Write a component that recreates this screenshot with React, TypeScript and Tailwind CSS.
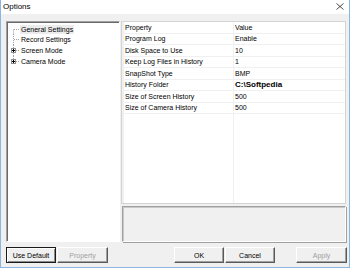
import React from "react";

const font = { fontFamily: '"Liberation Sans", Arial, sans-serif' };

const props: [string, string, boolean?][] = [
  ["Property", "Value"],
  ["Program Log", "Enable"],
  ["Disk Space to Use", "10"],
  ["Keep Log Files in History", "1"],
  ["SnapShot Type", "BMP"],
  ["History Folder", "C:\\Softpedia", true],
  ["Size of Screen History", "500"],
  ["Size of Camera History", "500"],
];

type Node = { label: string; kind: "first" | "mid" | "plus" | "lastplus"; selected?: boolean };

const tree: Node[] = [
  { label: "General Settings", kind: "first", selected: true },
  { label: "Record Settings", kind: "mid" },
  { label: "Screen Mode", kind: "plus" },
  { label: "Camera Mode", kind: "lastplus" },
];

function TreeGlyph({ kind }: { kind: Node["kind"] }) {
  const dot = { stroke: "#a0a0a0", strokeWidth: 1, strokeDasharray: "1 1" };
  const hasBox = kind === "plus" || kind === "lastplus";
  return (
    <svg width="12" height="11" viewBox="0 0 12 11" className="shrink-0 overflow-visible">
      {kind === "first" && <line x1="5.5" y1="5.5" x2="5.5" y2="11" {...dot} />}
      {kind === "mid" && <line x1="5.5" y1="0" x2="5.5" y2="11" {...dot} />}
      {kind === "plus" && (
        <>
          <line x1="5.5" y1="0" x2="5.5" y2="3" {...dot} />
          <line x1="5.5" y1="8" x2="5.5" y2="11" {...dot} />
        </>
      )}
      {kind === "lastplus" && <line x1="5.5" y1="0" x2="5.5" y2="3" {...dot} />}
      <line x1={hasBox ? 8 : 6} y1="5.5" x2="12" y2="5.5" {...dot} />
      {hasBox && (
        <>
          <rect x="3.5" y="3.5" width="4" height="4" fill="#fff" stroke="#8c8c8c" />
          <line x1="4" y1="5.5" x2="7" y2="5.5" stroke="#000" />
          <line x1="5.5" y1="4" x2="5.5" y2="7" stroke="#000" />
        </>
      )}
    </svg>
  );
}

function Btn({
  children,
  w,
  disabled,
  isDefault,
  className = "",
}: {
  children: React.ReactNode;
  w: string;
  disabled?: boolean;
  isDefault?: boolean;
  className?: string;
}) {
  return (
    <button
      className={`${w} ${className} h-[16px] text-[7px] leading-none bg-[#f0f0f0] ${
        isDefault
          ? "border border-[#1a1a1a] shadow-[inset_1px_1px_#fff,inset_-1px_-1px_#8a8a8a]"
          : "border border-t-[#fff] border-l-[#fff] border-r-[#5a5a5a] border-b-[#5a5a5a] shadow-[inset_-1px_-1px_#a0a0a0]"
      } ${disabled ? "text-[#a0a0a0]" : "text-black"}`}
    >
      {children}
    </button>
  );
}

export default function App() {
  return (
    <div
      style={font}
      className="w-[350px] h-[268px] flex flex-col bg-[#f0f0f0] border-l border-r border-b border-[#8bb6e3] text-black"
    >
      <div className="h-[14px] bg-white flex items-center justify-between pl-[2px] pr-[5px] pb-[1px]">
        <span className="text-[8px] leading-none">Options</span>
        <svg width="8" height="7" viewBox="0 0 8 7">
          <path d="M0.5 0.5 L7.5 6.5 M7.5 0.5 L0.5 6.5" stroke="#222" strokeWidth="0.8" fill="none" />
        </svg>
      </div>

      <div className="flex pl-[5px] pt-[7px] gap-[1px]">
        <div className="w-[114px] h-[221px] bg-white border border-t-[#a0a0a0] border-l-[#a0a0a0] border-r-[#fff] border-b-[#fff] shadow-[inset_1px_1px_#696969] pt-[2px] pl-[1px]">
          {tree.map((n) => (
            <div key={n.label} className="h-[10.67px] flex items-center">
              <TreeGlyph kind={n.kind} />
              <span
                className={`text-[7px] leading-[9px] px-[1px] ${n.selected ? "bg-[#ececec]" : ""}`}
              >
                {n.label}
              </span>
            </div>
          ))}
        </div>

        <div className="w-[225px] flex flex-col">
          <div className="h-[183px] bg-white border border-[#d4d4d4] flex flex-col">
            {props.map(([k, v, bold]) => (
              <div key={k} className="h-[11.5px] flex border-b border-[#f0f0f0]">
                <div className="w-[2px] bg-[#f0f0f0]" />
                <div className="w-[110px] border-r border-[#f0f0f0] pl-[1px] flex items-center text-[7px] leading-none whitespace-nowrap">
                  {k}
                </div>
                <div
                  className={`flex-1 pl-[1px] flex items-center leading-none whitespace-nowrap ${
                    bold ? "text-[8px] font-bold" : "text-[7px]"
                  }`}
                >
                  {v}
                </div>
              </div>
            ))}
            <div className="flex-1 flex">
              <div className="w-[2px] bg-[#f0f0f0]" />
              <div className="w-[110px] border-r border-[#f0f0f0]" />
              <div className="flex-1" />
            </div>
          </div>
          <div className="h-[36px] mt-[2px] ml-[1px] border border-t-[#a0a0a0] border-l-[#a0a0a0] border-r-[#fff] border-b-[#fff] shadow-[inset_1px_1px_#c8c8c8,1px_1px_#a0a0a0]" />
        </div>
      </div>

      <div className="flex pl-[5px] mt-[5px]">
        <Btn w="w-[50px]" isDefault>
          Use Default
        </Btn>
        <Btn w="w-[51px]" className="ml-[1px]" disabled>
          Property
        </Btn>
        <Btn w="w-[50px]" className="ml-[66px]">
          OK
        </Btn>
        <Btn w="w-[50px]" className="ml-[1px]">
          Cancel
        </Btn>
        <Btn w="w-[51px]" className="ml-[21px]" disabled>
          Apply
        </Btn>
      </div>
    </div>
  );
}
